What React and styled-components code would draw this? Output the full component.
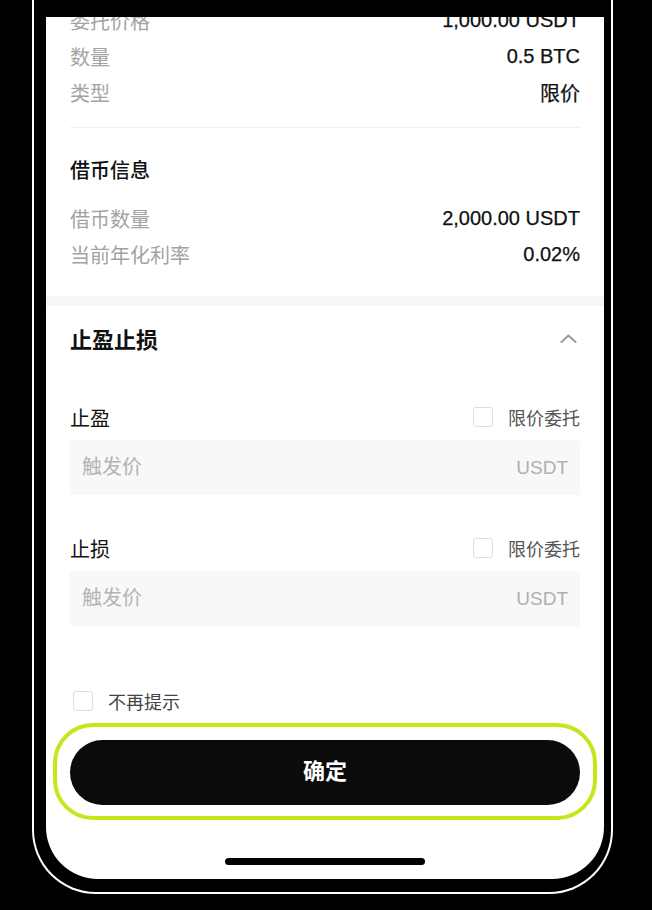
import styled, { createGlobalStyle } from 'styled-components';

const GlobalStyle = createGlobalStyle`
  html, body {
    margin: 0;
    padding: 0;
    background: #000;
  }
  * {
    box-sizing: border-box;
  }
`;

const Page = styled.div`
  width: 652px;
  height: 910px;
  background: #000;
  padding-left: 32px;
  overflow: hidden;
  font-family: 'Liberation Sans', 'Noto Sans CJK SC', sans-serif;
`;

const Frame = styled.div`
  width: 581px;
  border: 2px solid #fff;
  border-top: none;
  border-radius: 0 0 64px 64px;
  padding: 17px 7px 13px 12px;
  background: #000;
`;

const Screen = styled.div`
  display: flex;
  flex-direction: column;
  background: #fff;
  border-radius: 0 0 52px 52px;
  overflow: hidden;
  padding-bottom: 14px;
`;

const Section = styled.div`
  display: flex;
  flex-direction: column;
  padding: 0 24px;
  margin-top: ${(p) => p.$top || 0}px;
`;

const InfoRow = styled.div`
  display: flex;
  justify-content: space-between;
  align-items: center;
  height: 36px;
  font-size: 20px;
`;

const Label = styled.span`
  color: #a3a3a3;
`;

const Value = styled.span`
  color: #111;
  -webkit-text-stroke: 0.25px #111;
`;

const Divider = styled.div`
  height: 1px;
  background: #f1f1f1;
  margin-top: 17px;
`;

const SubTitle = styled.div`
  font-size: 20px;
  font-weight: 500;
  line-height: 28px;
  color: #111;
  margin-top: 29px;
  margin-bottom: 15px;
`;

const Band = styled.div`
  height: 10px;
  background: #f6f6f6;
  margin-top: 24px;
`;

const Header = styled.div`
  display: flex;
  justify-content: space-between;
  align-items: center;
  height: 68px;
  padding: 0 27px 4px 24px;
  font-size: 22px;
  font-weight: 700;
  color: #111;
`;

const FieldHead = styled.div`
  display: flex;
  justify-content: space-between;
  align-items: center;
  height: 28px;
  margin-top: ${(p) => p.$top}px;
`;

const FieldName = styled.span`
  font-size: 20px;
  color: #111;
`;

const CheckLabel = styled.label`
  display: flex;
  align-items: center;
  gap: ${(p) => p.$gap || 15}px;
  font-size: 18px;
  color: ${(p) => p.$color || '#555'};
`;

const Box = styled.span`
  width: 20px;
  height: 20px;
  border: 1.5px solid #dedede;
  border-radius: 3px;
  margin-left: ${(p) => p.$inset || 0}px;
`;

const Field = styled.div`
  display: flex;
  align-items: center;
  justify-content: space-between;
  height: 55px;
  margin-top: 9px;
  padding: 0 12px;
  background: #f8f8f8;
  border-radius: 2px;
`;

const Input = styled.input`
  border: none;
  outline: none;
  background: transparent;
  font-family: inherit;
  font-size: 20px;
  color: #111;
  flex: 1;
  padding: 0;

  &::placeholder {
    color: #b3b3b3;
  }
`;

const Unit = styled.span`
  font-size: 19px;
  color: #b0b0b0;
`;

const Ring = styled.div`
  margin: 8px -17px 0;
  border: 4px solid #c6e51b;
  border-radius: 40px;
  padding: 13px 13px 11px;
`;

const ConfirmButton = styled.button`
  display: block;
  width: 100%;
  height: 65px;
  border: none;
  border-radius: 33px;
  background: #0b0b0b;
  color: #fff;
  font-family: inherit;
  font-size: 22px;
  font-weight: 700;
  padding: 0 0 8px;
  cursor: pointer;
`;

const HomeBar = styled.div`
  align-self: center;
  width: 200px;
  height: 7px;
  border-radius: 4px;
  background: #000;
  margin-top: 38px;
`;

const orderRows = [
  ['委托价格', '1,000.00 USDT'],
  ['数量', '0.5 BTC'],
  ['类型', '限价'],
];

const loanRows = [
  ['借币数量', '2,000.00 USDT'],
  ['当前年化利率', '0.02%'],
];

const ChevronUp = () => (
  <svg width="17" height="9" viewBox="0 0 17 9" fill="none">
    <polyline points="1.5,8 8.5,1.5 15.5,8" stroke="#9a9a9a" strokeWidth="2" strokeLinecap="round" strokeLinejoin="round" />
  </svg>
);

const TriggerField = ({ name, top }) => (
  <>
    <FieldHead $top={top}>
      <FieldName>{name}</FieldName>
      <CheckLabel>
        <Box />
        限价委托
      </CheckLabel>
    </FieldHead>
    <Field>
      <Input placeholder="触发价" />
      <Unit>USDT</Unit>
    </Field>
  </>
);

export default function App() {
  return (
    <>
      <GlobalStyle />
      <Page>
        <Frame>
          <Screen>
            <Section $top={-15}>
              {orderRows.map(([k, v]) => (
                <InfoRow key={k}>
                  <Label>{k}</Label>
                  <Value>{v}</Value>
                </InfoRow>
              ))}
              <Divider />
              <SubTitle>借币信息</SubTitle>
              {loanRows.map(([k, v]) => (
                <InfoRow key={k}>
                  <Label>{k}</Label>
                  <Value>{v}</Value>
                </InfoRow>
              ))}
            </Section>
            <Band />
            <Header>
              止盈止损
              <ChevronUp />
            </Header>
            <Section>
              <TriggerField name="止盈" top={29} />
              <TriggerField name="止损" top={39} />
              <FieldHead $top={61}>
                <CheckLabel $gap={15} $color="#444">
                  <Box $inset={3} />
                  不再提示
                </CheckLabel>
              </FieldHead>
              <Ring>
                <ConfirmButton>确定</ConfirmButton>
              </Ring>
            </Section>
            <HomeBar />
          </Screen>
        </Frame>
      </Page>
    </>
  );
}
